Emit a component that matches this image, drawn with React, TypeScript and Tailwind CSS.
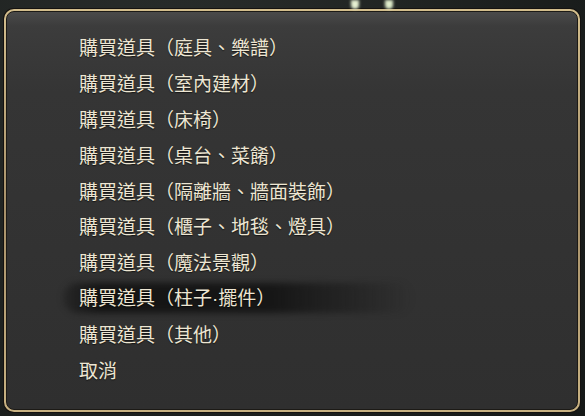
const items: React.ReactNode[] = [
  "購買道具（庭具、樂譜）",
  "購買道具（室內建材）",
  "購買道具（床椅）",
  "購買道具（桌台、菜餚）",
  "購買道具（隔離牆、牆面裝飾）",
  "購買道具（櫃子、地毯、燈具）",
  "購買道具（魔法景觀）",
  <>
    購買道具（柱子<span className="font-['Liberation_Sans',sans-serif]">·</span>擺件）
  </>,
  "購買道具（其他）",
  "取消",
];

const selected = 7;

export default function App() {
  return (
    <div className="relative w-[585px] h-[416px] overflow-hidden bg-[radial-gradient(circle_at_30%_20%,#2a2e2c,#151817)]">
      {/* glow peeking over the top edge */}
      <div className="absolute left-[351px] top-0 w-[8px] h-[9px] rounded-b-full bg-[#e6f0d2] blur-[1.5px]" />
      <div className="absolute left-[385px] top-0 w-[8px] h-[9px] rounded-b-full bg-[#dfeccb] blur-[1.5px]" />

      <div className="ml-[3px] mt-[8px] w-[578px] h-[405px] rounded-[11px] p-px bg-[#141210]">
        <div className="h-full rounded-[10px] p-[2px] bg-[linear-gradient(180deg,#d2bd8c,#a8916a_50%,#c8b282)]">
          <div className="h-full rounded-[8px] border border-[#1c1a16] bg-[linear-gradient(180deg,#4a4a4a_0px,#3c3c3c_14px,#353535_80px,#2f2f2f_100%)] pt-[17px] pl-[72px]">
            <ul className="flex flex-col font-['Noto_Sans_CJK_TC','Noto_Sans_CJK_SC',sans-serif] text-[19px] text-[#ede6d3]">
              {items.map((label, i) => (
                <li key={i} className="relative h-[35.8px] flex items-center">
                  {i === selected && (
                    <div className="absolute left-[-16px] top-[3px] w-[350px] h-[30px] rounded-full bg-[linear-gradient(90deg,rgba(18,18,18,0.3),rgba(18,18,18,0.9)_10%,rgba(18,18,18,0.85)_60%,rgba(18,18,18,0))] blur-[3px]" />
                  )}
                  <span className="relative leading-none [text-shadow:0_1px_1px_rgba(0,0,0,0.6)]">{label}</span>
                </li>
              ))}
            </ul>
          </div>
        </div>
      </div>
    </div>
  );
}
